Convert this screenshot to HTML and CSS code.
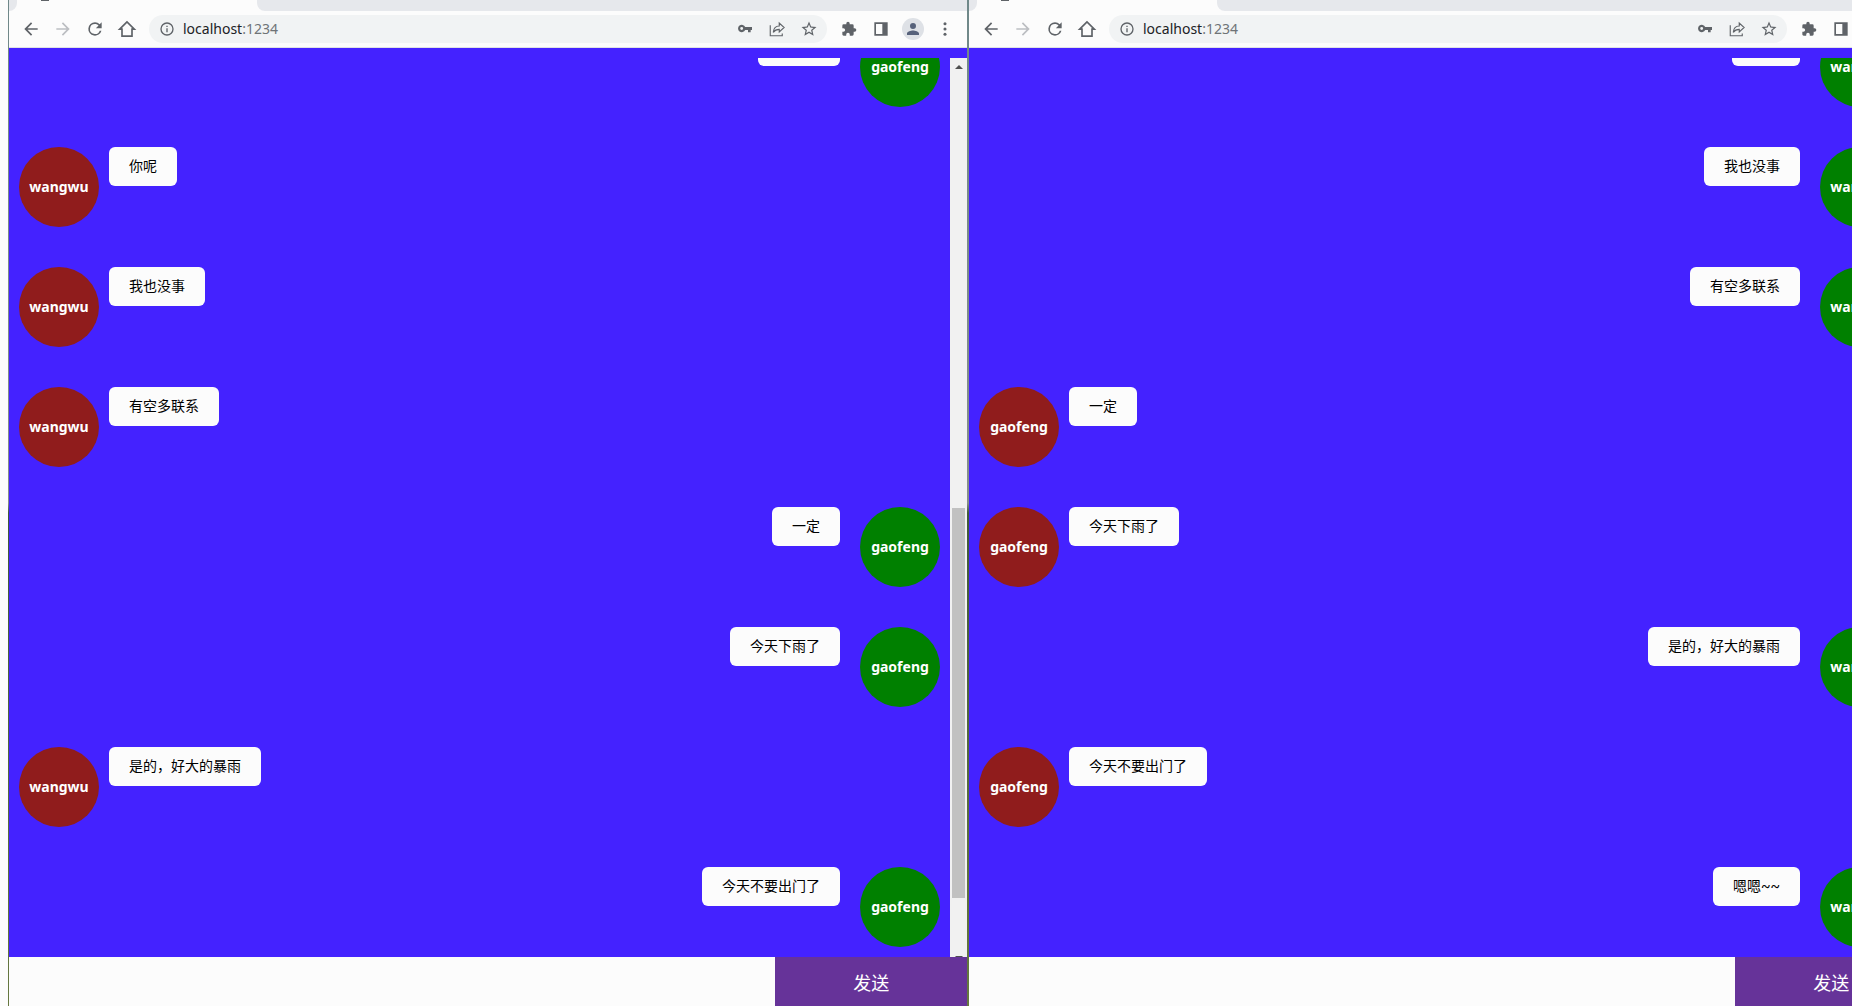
FILE: index.html
```html
<!DOCTYPE html>
<html lang="zh-CN">
<head>
<meta charset="utf-8">
<title>localhost:1234</title>
<link rel="stylesheet" href="styles.css">
</head>
<body>
<svg class="sprite" aria-hidden="true">
  <symbol id="i-back" viewBox="0 0 24 24"><path d="M20 11H7.8l5.6-5.6L12 4l-8 8 8 8 1.4-1.4L7.8 13H20z"/></symbol>
  <symbol id="i-forward" viewBox="0 0 24 24"><path d="M4 13h12.200l-5.600 5.600L12 20l8-8-8-8-1.400 1.400 5.600 5.600H4z"/></symbol>
  <symbol id="i-reload" viewBox="0 0 24 24"><path d="M17.650 6.350A7.960 7.960 0 0 0 12 4a8 8 0 1 0 7.730 10h-2.080A6 6 0 1 1 12 6c1.660 0 3.140.69 4.220 1.780L13 11h7V4z"/></symbol>
  <symbol id="i-home" viewBox="0 0 24 24"><path d="M12 3.500 3.200 12.200H6V20.500h12v-8.300h2.800z" fill="none" stroke="currentColor" stroke-width="2"/></symbol>
  <symbol id="i-info" viewBox="0 0 24 24"><path d="M11 7h2v2h-2zm0 4h2v6h-2zm1-9a10 10 0 1 0 0 20 10 10 0 0 0 0-20zm0 18a8 8 0 1 1 0-16 8 8 0 0 1 0 16z"/></symbol>
  <symbol id="i-key" viewBox="0 0 24 24"><path d="M12.300 9A5.600 5.600 0 1 0 12.300 13.500H16.500V17h4v-3.500h2V9zM7 13.500a2.200 2.200 0 1 1 0-4.400 2.200 2.200 0 0 1 0 4.400z"/></symbol>
  <symbol id="i-share" viewBox="0 0 24 24"><path d="M3 7v14h16v-3M7 16.500c.5-5.500 3.500-8.500 8-8.500V4l6.500 6-6.500 6v-3.500c-4 0-6 1-8 4z" fill="none" stroke="currentColor" stroke-width="1.500"/></symbol>
  <symbol id="i-star" viewBox="0 0 24 24"><path d="m22 9.240-7.190-.62L12 2 9.190 8.630 2 9.240l5.460 4.730L5.820 21 12 17.270 18.180 21l-1.630-7.030zM12 15.400l-3.760 2.270 1-4.280-3.320-2.880 4.380-.38L12 6.100l1.710 4.040 4.380.38-3.320 2.880 1 4.280z"/></symbol>
  <symbol id="i-puzzle" viewBox="0 0 24 24"><path d="M20.500 11H19V7a2 2 0 0 0-2-2h-4V3.500a2.500 2.500 0 0 0-5 0V5H4a2 2 0 0 0-2 2v3.800h1.500a2.700 2.700 0 0 1 0 5.400H2V20c0 1.100.9 2 2 2h3.800v-1.500a2.700 2.700 0 0 1 5.400 0V22H17a2 2 0 0 0 2-2v-4h1.500a2.500 2.500 0 0 0 0-5z"/></symbol>
  <symbol id="i-panel" viewBox="0 0 24 24"><path d="M2 2v20h20V2zm2.500 2.500H14v15H4.500z"/></symbol>
  <symbol id="i-person" viewBox="0 0 24 24"><path d="M12 12a4 4 0 1 0 0-8 4 4 0 0 0 0 8zm0 2c-2.670 0-8 1.340-8 4v2h16v-2c0-2.660-5.330-4-8-4z"/></symbol>
  <symbol id="i-menu" viewBox="0 0 24 24"><circle cx="12" cy="4" r="2.300"/><circle cx="12" cy="12" r="2.300"/><circle cx="12" cy="20" r="2.300"/></symbol>
</svg>

<main class="desktop">
  <section class="window" aria-label="gaofeng">
    <div class="tabs"><span class="tabs-left"></span><span class="tab"><i class="favicon"></i></span><span class="tabs-rest"></span></div>
    <nav class="toolbar">
      <button class="tool" aria-label="后退"><svg><use href="#i-back"/></svg></button>
      <button class="tool off" aria-label="前进"><svg><use href="#i-forward"/></svg></button>
      <button class="tool" aria-label="刷新"><svg><use href="#i-reload"/></svg></button>
      <button class="tool" aria-label="主页"><svg><use href="#i-home"/></svg></button>
      <div class="omnibox">
        <svg class="info"><use href="#i-info"/></svg>
        <span class="url">localhost<span class="port">:1234</span></span>
        <button class="tool small" aria-label="密码"><svg><use href="#i-key"/></svg></button>
        <button class="tool medium" aria-label="分享"><svg><use href="#i-share"/></svg></button>
        <button class="tool medium" aria-label="收藏"><svg><use href="#i-star"/></svg></button>
      </div>
      <button class="tool small" aria-label="扩展程序"><svg><use href="#i-puzzle"/></svg></button>
      <button class="tool small" aria-label="侧边栏"><svg><use href="#i-panel"/></svg></button>
      <button class="tool profile" aria-label="用户"><svg><use href="#i-person"/></svg></button>
      <button class="tool small" aria-label="菜单"><svg><use href="#i-menu"/></svg></button>
    </nav>
    <div class="chat">
      <ul class="messages">
        <li class="message mine"><b class="avatar">gaofeng</b><p class="bubble">&#12288;&#12288;&#12288;</p></li>
        <li class="message"><b class="avatar">wangwu</b><p class="bubble">你呢</p></li>
        <li class="message"><b class="avatar">wangwu</b><p class="bubble">我也没事</p></li>
        <li class="message"><b class="avatar">wangwu</b><p class="bubble">有空多联系</p></li>
        <li class="message mine"><b class="avatar">gaofeng</b><p class="bubble">一定</p></li>
        <li class="message mine"><b class="avatar">gaofeng</b><p class="bubble">今天下雨了</p></li>
        <li class="message"><b class="avatar">wangwu</b><p class="bubble">是的，好大的暴雨</p></li>
        <li class="message mine"><b class="avatar">gaofeng</b><p class="bubble">今天不要出门了</p></li>
      </ul>
      <div class="scrollbar"><span class="arrow up"></span><span class="before"></span><span class="thumb"></span><span class="after"></span><span class="arrow down"></span></div>
    </div>
    <form class="composer">
      <input class="entry" type="text" aria-label="消息">
      <button class="send" type="button">发送</button>
    </form>
  </section>

  <section class="window" aria-label="wangwu">
    <div class="tabs"><span class="tabs-left"></span><span class="tab"><i class="favicon"></i></span><span class="tabs-rest"></span></div>
    <nav class="toolbar">
      <button class="tool" aria-label="后退"><svg><use href="#i-back"/></svg></button>
      <button class="tool off" aria-label="前进"><svg><use href="#i-forward"/></svg></button>
      <button class="tool" aria-label="刷新"><svg><use href="#i-reload"/></svg></button>
      <button class="tool" aria-label="主页"><svg><use href="#i-home"/></svg></button>
      <div class="omnibox">
        <svg class="info"><use href="#i-info"/></svg>
        <span class="url">localhost<span class="port">:1234</span></span>
        <button class="tool small" aria-label="密码"><svg><use href="#i-key"/></svg></button>
        <button class="tool medium" aria-label="分享"><svg><use href="#i-share"/></svg></button>
        <button class="tool medium" aria-label="收藏"><svg><use href="#i-star"/></svg></button>
      </div>
      <button class="tool small" aria-label="扩展程序"><svg><use href="#i-puzzle"/></svg></button>
      <button class="tool small" aria-label="侧边栏"><svg><use href="#i-panel"/></svg></button>
      <button class="tool profile" aria-label="用户"><svg><use href="#i-person"/></svg></button>
      <button class="tool small" aria-label="菜单"><svg><use href="#i-menu"/></svg></button>
    </nav>
    <div class="chat">
      <ul class="messages">
        <li class="message mine"><b class="avatar">wangwu</b><p class="bubble">&#12288;&#12288;</p></li>
        <li class="message mine"><b class="avatar">wangwu</b><p class="bubble">我也没事</p></li>
        <li class="message mine"><b class="avatar">wangwu</b><p class="bubble">有空多联系</p></li>
        <li class="message"><b class="avatar">gaofeng</b><p class="bubble">一定</p></li>
        <li class="message"><b class="avatar">gaofeng</b><p class="bubble">今天下雨了</p></li>
        <li class="message mine"><b class="avatar">wangwu</b><p class="bubble">是的，好大的暴雨</p></li>
        <li class="message"><b class="avatar">gaofeng</b><p class="bubble">今天不要出门了</p></li>
        <li class="message mine"><b class="avatar">wangwu</b><p class="bubble">嗯嗯~~</p></li>
      </ul>
      <div class="scrollbar"><span class="arrow up"></span><span class="before"></span><span class="thumb"></span><span class="after"></span><span class="arrow down"></span></div>
    </div>
    <form class="composer">
      <input class="entry" type="text" aria-label="消息">
      <button class="send" type="button">发送</button>
    </form>
  </section>
</main>
</body>
</html>
```
FILE: styles.css
```css
* { box-sizing: border-box; }

body {
  margin: 0;
  overflow: hidden;
  background: #fcfcfc;
  font-family: "Noto Sans", "Noto Sans CJK SC", sans-serif;
  font-size: 14px;
}

button, input { font: inherit; border: 0; padding: 0; }
.sprite { display: none; }

.desktop {
  display: flex;
  gap: 2px;
  width: max-content;
  height: 100vh;
  margin-left: 8px;
  padding-left: 1px;
  background: linear-gradient(#6f8889 0, #868f8b 50%, #3f5a3c 51%, #66783f 100%);
}

.window {
  display: flex;
  flex-direction: column;
  width: calc(50vw + 32px);
  background: #fcfcfc;
}

/* tab strip */
.tabs { display: flex; height: 11px; background: #fcfcfc; }
.tabs-left { width: 8px; background: #e6e8ec; border-bottom-right-radius: 8px; }
.tab { width: 240px; padding-left: 24px; }
.favicon { display: block; width: 8px; height: 1px; background: #5f6368; }
.tabs-rest { flex: 1; background: #e6e8ec; border-bottom-left-radius: 8px; }

/* toolbar */
.toolbar {
  display: flex;
  align-items: center;
  height: 37px;
  padding: 0 6px;
  border-bottom: 1px solid #dfe1e5;
}
.tool {
  display: grid;
  place-items: center;
  width: 32px;
  height: 28px;
  background: none;
  color: #5f6368;
}
.tool svg { width: 20px; height: 20px; fill: currentColor; }
.tool.small svg { width: 16px; height: 16px; }
.tool.medium svg { width: 18px; height: 18px; }
.tool.off { color: #bcbec2; }
.tool.profile { color: #56617a; }
.tool.profile svg {
  width: 22px;
  height: 22px;
  padding: 2px;
  border-radius: 50%;
  background: #dee1e6;
}
.omnibox {
  display: flex;
  flex: 1;
  align-items: center;
  height: 28px;
  margin: 0 6px;
  padding: 0 2px 0 10px;
  border-radius: 14px;
  background: #f1f3f4;
}
.info { width: 16px; height: 16px; fill: #5f6368; }
.url { flex: 1; margin-left: 8px; line-height: 20px; color: #202124; }
.port { color: #6f7377; }

/* chat */
.chat {
  display: flex;
  flex: 1;
  min-height: 0;
  padding-top: 10px;
  background: #4422ff;
}
.messages {
  display: flex;
  flex: 1;
  flex-direction: column;
  justify-content: flex-end;
  gap: 40px;
  margin: 0;
  padding: 0 10px 10px;
  overflow: hidden;
  list-style: none;
}
.message { display: flex; flex: none; align-items: flex-start; gap: 10px; }
.message.mine { flex-direction: row-reverse; gap: 20px; }
.avatar {
  width: 80px;
  height: 80px;
  border-radius: 50%;
  background: #901c1c;
  color: #fff;
  line-height: 80px;
  text-align: center;
}
.mine .avatar { background: #008000; }
.bubble {
  margin: 0;
  padding: 10px 20px;
  border-radius: 6px;
  background: #fcfcfc;
  color: #000;
  font-family: Roboto, "Noto Sans CJK SC", sans-serif;
  line-height: 19px;
  white-space: pre;
}

.scrollbar {
  display: flex;
  flex-direction: column;
  align-items: center;
  width: 17px;
  overflow: hidden;
  background: #f1f1f1;
}
.arrow { border: 4px solid transparent; }
.up { margin: 3px 0 6px; border-bottom-color: #505050; }
.down { margin-bottom: -7px; border-top-color: #505050; }
.before { flex: 433; }
.thumb { flex: 390; width: 13px; background: #c1c1c1; }
.after { flex: 58; }

/* composer */
.composer { display: flex; height: 49px; }
.entry { flex: 4; min-width: 0; background: #fcfcfc; outline: 0; }
.send { flex: 1; background: #663399; color: #fff; font-size: 18px; }
```
